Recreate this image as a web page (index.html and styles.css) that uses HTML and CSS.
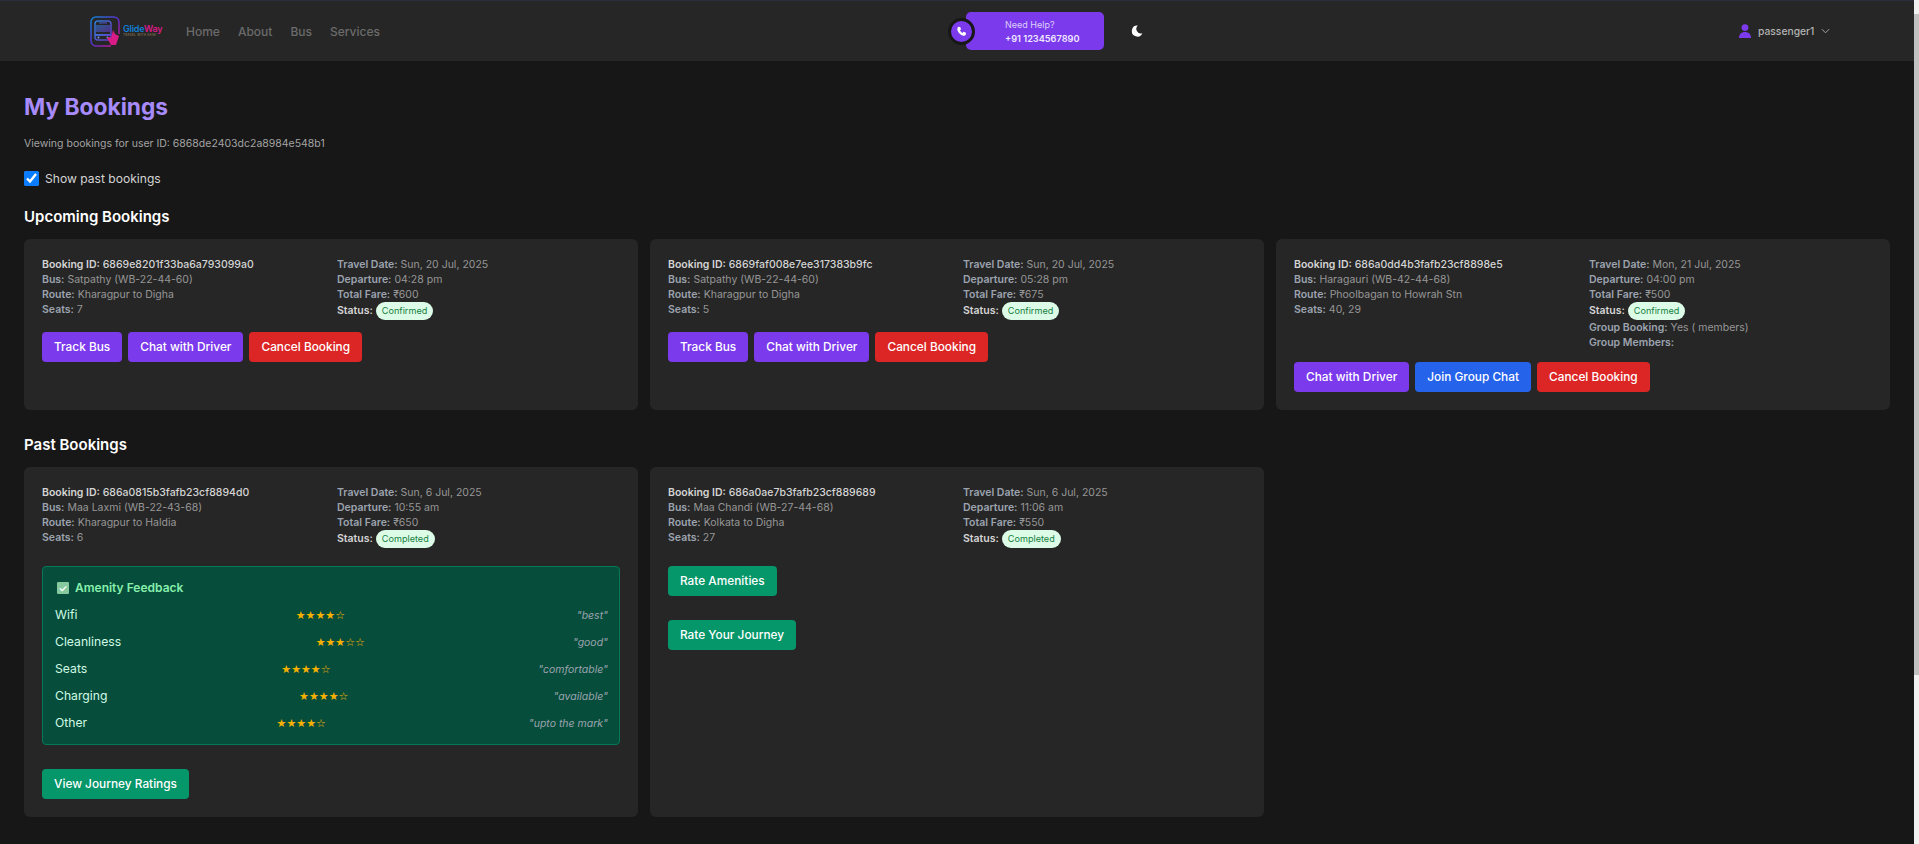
FILE: index.html
```html
<!DOCTYPE html>
<html lang="en">
<head>
<meta charset="utf-8">
<title>My Bookings</title>
<link rel="stylesheet" href="styles.css">
</head>
<body>
<header class="nav">
  <div class="nav-left">
    <div class="logo">
      <svg class="logo-mark" viewBox="0 0 30 31" width="30" height="31" fill="none">
        <defs>
          <linearGradient id="lg" x1="0" y1="0" x2="1" y2="1"><stop offset="0" stop-color="#0e86d4"/><stop offset=".5" stop-color="#5a2fc8"/><stop offset="1" stop-color="#e0127f"/></linearGradient>
          <linearGradient id="lb" x1="0" y1="0" x2="1" y2="1"><stop offset="0" stop-color="#2f7fd8"/><stop offset="1" stop-color="#6a35c4"/></linearGradient>
        </defs>
        <path d="M21 30H6a5 5 0 0 1-5-5V6a5 5 0 0 1 5-5h18a5 5 0 0 1 5 5v12" stroke="url(#lg)" stroke-width="1.500"/>
        <rect x="5" y="5" width="16" height="19" rx="3" stroke="url(#lb)" stroke-width="1.500"/>
        <path d="M6 9h14v7H6z" fill="url(#lb)" fill-opacity=".6"/>
        <rect x="9" y="6.500" width="8" height="1" fill="url(#lb)"/>
        <rect x="5" y="18" width="16" height="2" fill="url(#lb)"/>
        <circle cx="8.500" cy="21.500" r="1" fill="#7a9be0"/><circle cx="17.500" cy="21.500" r="1" fill="#7a9be0"/>
        <path d="M23 14l2 4 4 2-3 9h-5l-4-7 2-1 2 1z" fill="#d81b86"/>
      </svg>
      <div class="logo-text">
        <span class="logo-name"><span class="logo-glide">Glide</span><span class="logo-way">Way</span></span>
        <span class="logo-tag">TRAVEL WITH EASE</span>
      </div>
    </div>
    <nav class="links">
      <a>Home</a><a>About</a><a>Bus</a><a>Services</a>
    </nav>
  </div>
  <div class="help">
    <span class="help-icon">
      <svg viewBox="0 0 24 24" width="11" height="11" fill="#fff"><path d="M6.600 1.800l3 .7 1.300 5-2.300 1.800c1 2.400 3.100 4.600 5.600 5.800l1.900-2.300 5 1.300.7 3c.2 1.200-.5 2.900-2.400 3.700-1.500.6-3.400.6-5.200-.2C9 18.500 5.500 15 3.400 9.700c-.8-2-.8-3.800-.2-5.400.7-1.700 2-2.700 3.400-2.500z"/></svg>
    </span>
    <div class="help-pill">
      <span class="help-q">Need Help?</span>
      <span class="help-num">+91 1234567890</span>
    </div>
  </div>
  <svg class="moon" viewBox="0 0 12 12" width="12" height="12"><path d="M6.800 .6A5.500 5.500 0 1 0 11.400 8.300 4.600 4.600 0 0 1 6.800 .6z" fill="#fff"/></svg>
  <div class="user">
    <svg viewBox="0 0 12 14" width="12" height="14" fill="#7c3aed"><circle cx="6" cy="3.600" r="3.400"/><path d="M0 14c0-4 2.500-6 6-6s6 2 6 6z"/></svg>
    <span>passenger1</span>
    <svg viewBox="0 0 10 6" width="9" height="6" fill="none" stroke="#b3b3b3" stroke-width="1"><path d="M1 1l4 4 4-4"/></svg>
  </div>
</header>

<main class="page">
  <h1 class="title">My Bookings</h1>
  <p class="viewing">Viewing bookings for user ID: 6868de2403dc2a8984e548b1</p>
  <label class="show-past"><input type="checkbox" checked><span>Show past bookings</span></label>

  <h2 class="section">Upcoming Bookings</h2>
  <div class="grid">
    <article class="card">
      <div class="info">
        <div>
          <div class="line strong"><b>Booking ID:</b> 6869e8201f33ba6a793099a0</div>
          <div class="line"><b>Bus:</b> Satpathy (WB-22-44-60)</div>
          <div class="line"><b>Route:</b> Kharagpur to Digha</div>
          <div class="line"><b>Seats:</b> 7</div>
        </div>
        <div>
          <div class="line"><b>Travel Date:</b> Sun, 20 Jul, 2025</div>
          <div class="line"><b>Departure:</b> 04:28 pm</div>
          <div class="line"><b>Total Fare:</b> ₹600</div>
          <div class="line status"><b>Status:</b> <span class="badge">Confirmed</span></div>
        </div>
      </div>
      <div class="actions">
        <button class="btn purple">Track Bus</button><button class="btn purple">Chat with Driver</button><button class="btn red">Cancel Booking</button>
      </div>
    </article>
    <article class="card">
      <div class="info">
        <div>
          <div class="line strong"><b>Booking ID:</b> 6869faf008e7ee317383b9fc</div>
          <div class="line"><b>Bus:</b> Satpathy (WB-22-44-60)</div>
          <div class="line"><b>Route:</b> Kharagpur to Digha</div>
          <div class="line"><b>Seats:</b> 5</div>
        </div>
        <div>
          <div class="line"><b>Travel Date:</b> Sun, 20 Jul, 2025</div>
          <div class="line"><b>Departure:</b> 05:28 pm</div>
          <div class="line"><b>Total Fare:</b> ₹675</div>
          <div class="line status"><b>Status:</b> <span class="badge">Confirmed</span></div>
        </div>
      </div>
      <div class="actions">
        <button class="btn purple">Track Bus</button><button class="btn purple">Chat with Driver</button><button class="btn red">Cancel Booking</button>
      </div>
    </article>
    <article class="card">
      <div class="info">
        <div>
          <div class="line strong"><b>Booking ID:</b> 686a0dd4b3fafb23cf8898e5</div>
          <div class="line"><b>Bus:</b> Haragauri (WB-42-44-68)</div>
          <div class="line"><b>Route:</b> Phoolbagan to Howrah Stn</div>
          <div class="line"><b>Seats:</b> 40, 29</div>
        </div>
        <div>
          <div class="line"><b>Travel Date:</b> Mon, 21 Jul, 2025</div>
          <div class="line"><b>Departure:</b> 04:00 pm</div>
          <div class="line"><b>Total Fare:</b> ₹500</div>
          <div class="line status"><b>Status:</b> <span class="badge">Confirmed</span></div>
          <div class="line"><b>Group Booking:</b> Yes ( members)</div>
          <div class="line"><b>Group Members:</b></div>
        </div>
      </div>
      <div class="actions">
        <button class="btn purple">Chat with Driver</button><button class="btn blue">Join Group Chat</button><button class="btn red">Cancel Booking</button>
      </div>
    </article>
  </div>

  <h2 class="section past">Past Bookings</h2>
  <div class="grid">
    <article class="card">
      <div class="info">
        <div>
          <div class="line strong"><b>Booking ID:</b> 686a0815b3fafb23cf8894d0</div>
          <div class="line"><b>Bus:</b> Maa Laxmi (WB-22-43-68)</div>
          <div class="line"><b>Route:</b> Kharagpur to Haldia</div>
          <div class="line"><b>Seats:</b> 6</div>
        </div>
        <div>
          <div class="line"><b>Travel Date:</b> Sun, 6 Jul, 2025</div>
          <div class="line"><b>Departure:</b> 10:55 am</div>
          <div class="line"><b>Total Fare:</b> ₹650</div>
          <div class="line status"><b>Status:</b> <span class="badge">Completed</span></div>
        </div>
      </div>
      <section class="feedback">
        <h3 class="fb-title"><span class="fb-check">✓</span>Amenity Feedback</h3>
        <div class="fb-row"><span class="fb-name">Wifi</span><span class="stars">★★★★☆</span><span class="fb-note">"best"</span></div>
        <div class="fb-row"><span class="fb-name">Cleanliness</span><span class="stars">★★★☆☆</span><span class="fb-note">"good"</span></div>
        <div class="fb-row"><span class="fb-name">Seats</span><span class="stars">★★★★☆</span><span class="fb-note">"comfortable"</span></div>
        <div class="fb-row"><span class="fb-name">Charging</span><span class="stars">★★★★☆</span><span class="fb-note">"available"</span></div>
        <div class="fb-row"><span class="fb-name">Other</span><span class="stars">★★★★☆</span><span class="fb-note">"upto the mark"</span></div>
      </section>
      <div class="stack"><button class="btn green">View Journey Ratings</button></div>
    </article>
    <article class="card">
      <div class="info">
        <div>
          <div class="line strong"><b>Booking ID:</b> 686a0ae7b3fafb23cf889689</div>
          <div class="line"><b>Bus:</b> Maa Chandi (WB-27-44-68)</div>
          <div class="line"><b>Route:</b> Kolkata to Digha</div>
          <div class="line"><b>Seats:</b> 27</div>
        </div>
        <div>
          <div class="line"><b>Travel Date:</b> Sun, 6 Jul, 2025</div>
          <div class="line"><b>Departure:</b> 11:06 am</div>
          <div class="line"><b>Total Fare:</b> ₹550</div>
          <div class="line status"><b>Status:</b> <span class="badge">Completed</span></div>
        </div>
      </div>
      <div class="stack first"><button class="btn green">Rate Amenities</button></div>
      <div class="stack"><button class="btn green">Rate Your Journey</button></div>
    </article>
  </div>
</main>
<div class="scrollbar"><div class="scrollbar-thumb"></div></div>
</body>
</html>
```

FILE: styles.css
```css
* { box-sizing: border-box; }
html { background: #171717; }
body { margin: 0; padding-right: 5px; background: #171717; color: #fff; font-family: Inter, "Liberation Sans", sans-serif; font-size: 10.500px; }

.scrollbar { position: fixed; top: 0; right: 0; width: 5px; height: 100vh; padding-top: 14px; background: #f1f1f1; }
.scrollbar-thumb { height: 661px; background: #c1c1c1; }

.nav { height: 61px; display: flex; align-items: center; background: #262626; border-top: 1px solid #2a2d3e; padding-left: 90px; }
.nav-left { display: flex; align-items: center; width: 871px; }
.logo { display: flex; align-items: center; width: 96px; }
.logo-mark { flex: none; }
.logo-text { display: flex; flex-direction: column; margin: -1px 0 0 3px; line-height: 1; }
.logo-name { font-size: 9px; font-weight: 600; letter-spacing: -.2px; }
.logo-glide { color: #0f7fd6; }
.logo-way { color: #d81b86; }
.logo-tag { font-size: 3px; color: #a58b5e; letter-spacing: .3px; margin-top: 1px; white-space: nowrap; }
.links { display: flex; gap: 18px; font-size: 12px; font-weight: 500; color: #6b6b6b; }

.help { display: flex; align-items: center; position: relative; width: 143px; }
.help-icon { width: 27px; height: 27px; border-radius: 50%; background: #7c3aed; border: 3px solid #171717; display: flex; align-items: center; justify-content: center; position: absolute; left: -13px; z-index: 1; }
.help-pill { margin-left: 5px; width: 138px; height: 38px; background: #7c3aed; border-radius: 5px; padding-left: 39px; display: flex; flex-direction: column; justify-content: center; gap: 3px; line-height: 11px; }
.help-q { color: #ddd0fb; font-weight: 400; font-size: 9px; }
.help-num { color: #efe9ff; font-weight: 600; font-size: 9.200px; }
.moon { margin: 0 0 1px 27px; }
.user { display: flex; align-items: center; gap: 7px; margin-left: 596px; font-size: 10.300px; font-weight: 500; color: #b3b3b3; }

.page { padding: 30px 24px 27px; }
.title { margin: 0; font-size: 22.750px; line-height: 31px; font-weight: 700; color: #a78bfa; }
.viewing { margin: 14px 0 0; font-size: 10.500px; line-height: 16px; color: #a3a3a3; }
.show-past { display: flex; align-items: center; gap: 6px; margin-top: 17.500px; height: 18px; font-size: 12.100px; font-weight: 400; color: #d4d4d4; }
.show-past input { margin: 0; width: 15px; height: 15px; accent-color: #0a7cff; }
.section { margin: 18.500px 0 11px; font-size: 15px; line-height: 22px; font-weight: 600; color: #fff; }
.section.past { margin-top: 24px; }

.grid { display: grid; grid-template-columns: repeat(3, 1fr); gap: 12px; }
.card { background: #262626; border-radius: 6px; padding: 18px; }
.info { display: grid; grid-template-columns: 1fr 1fr; column-gap: 12px; }
.line { font-size: 10.500px; line-height: 15px; color: #969696; font-weight: 400; }
.line b { font-weight: 600; color: #9ca3af; }
.line.strong { color: #d4d4d4; font-weight: 500; }
.line.strong b { color: #d4d4d4; }
.line.status { height: 18px; line-height: 18px; }
.line.status b { color: #d4d4d4; }
.badge { display: inline-block; height: 18px; line-height: 18px; padding: 0 6px; border-radius: 9px; background: #dcfce7; color: #15803d; font-size: 9.100px; font-weight: 400; }

.actions { display: flex; gap: 6px; margin-top: 12px; }
.btn { height: 30px; padding: 0 12px 1px; border: 0; border-radius: 4px; color: #fff; font-family: inherit; font-size: 11.850px; font-weight: 500; white-space: nowrap; }
.purple { background: #7c3aed; }
.red { background: #dc2626; }
.blue { background: #2563eb; }
.green { background: #059669; }

.feedback { margin-top: 18px; height: 179px; padding: 11.500px 11px 0 12px; background: #064e3b; border: 1px solid #047857; border-radius: 4px; }
.fb-title { margin: 0 0 5px; height: 18px; padding-left: 2px; display: flex; align-items: center; gap: 6px; font-size: 12px; font-weight: 600; color: #86efac; }
.fb-check { width: 12px; height: 12px; background: #86c99e; color: #fff; font-size: 10px; line-height: 12px; text-align: center; border-radius: 1px; }
.fb-row { height: 27px; display: flex; justify-content: space-between; align-items: center; }
.fb-name { font-size: 12.200px; color: #d1fae5; margin-bottom: 2px; }
.stars { font-size: 11px; color: #f5b000; font-family: "DejaVu Sans", sans-serif; padding-right: 13.500px; }
.fb-note { font-size: 10.500px; font-style: italic; color: #9ca3af; }

.stack { margin-top: 24px; }
.stack.first { margin-top: 18px; }
```
